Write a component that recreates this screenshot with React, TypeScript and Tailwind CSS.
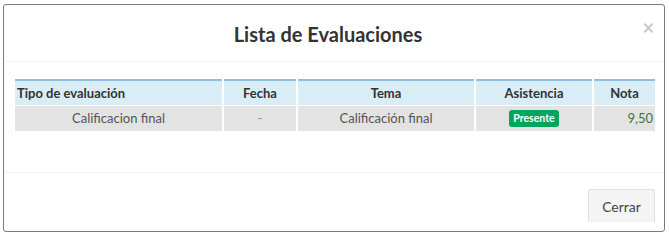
const columns = [
  { label: "Tipo de evaluación", align: "text-left pl-[2px]" },
  { label: "Fecha", align: "text-center" },
  { label: "Tema", align: "text-center" },
  { label: "Asistencia", align: "text-center" },
  { label: "Nota", align: "text-center" },
];

export default function App() {
  return (
    <div
      className="h-[237px] w-[669px] bg-white"
      style={{ fontFamily: "Lato, 'Liberation Sans', sans-serif" }}
    >
      <div className="ml-[3px] pt-[4px]">
        <div className="flex h-[228px] w-[662px] flex-col rounded-[3px] border border-[#7a7a7a] bg-white">
          {/* header */}
          <div className="relative flex h-[57px] items-center justify-center border-b border-[#f2f2f2] pr-[12px]">
            <h4 className="pt-[1px] text-[20px] font-bold text-[#333]">Lista de Evaluaciones</h4>
            <span className="absolute right-[10px] top-[12px] text-[20px] font-bold leading-none text-[#c8c8c8]">
              ×
            </span>
          </div>

          {/* body */}
          <div className="h-[110px] pl-[11px] pr-[9px] pt-[17px]">
            <div className="grid grid-cols-[207px_72px_176px_116px_61px] gap-x-[2px] gap-y-[1px] text-[13px]">
              {columns.map((c) => (
                <div
                  key={c.label}
                  className={`h-[26px] border-t-2 border-[#8cbfe2] bg-[#d9edf7] pt-[3px] font-bold text-[#333] ${c.align}`}
                >
                  {c.label}
                </div>
              ))}
              <div className="flex h-[25px] items-center justify-center bg-[#e3e3e3] text-[#555]">
                Calificacion final
              </div>
              <div className="flex h-[25px] items-center justify-center bg-[#e3e3e3] text-[#999]">-</div>
              <div className="flex h-[25px] items-center justify-center bg-[#e3e3e3] text-[#555]">
                Calificación final
              </div>
              <div className="flex h-[25px] items-center justify-center bg-[#e3e3e3]">
                <span className="rounded-[3px] bg-[#00a65a] px-[4px] py-[1px] text-[10.5px] font-bold leading-[15px] text-white">
                  Presente
                </span>
              </div>
              <div className="flex h-[25px] items-center justify-end bg-[#e3e3e3] pr-[2px] text-[#3c763d]">
                9,50
              </div>
            </div>
          </div>

          {/* footer */}
          <div className="flex flex-1 justify-end border-t border-[#f2f2f2] pr-[9px] pt-[16px]">
            <button className="h-[33px] w-[67px] rounded-t-[3px] border border-b-0 border-[#e0e0e0] bg-[#f4f4f4] text-[14px] text-[#444]">
              Cerrar
            </button>
          </div>
        </div>
      </div>
    </div>
  );
}
